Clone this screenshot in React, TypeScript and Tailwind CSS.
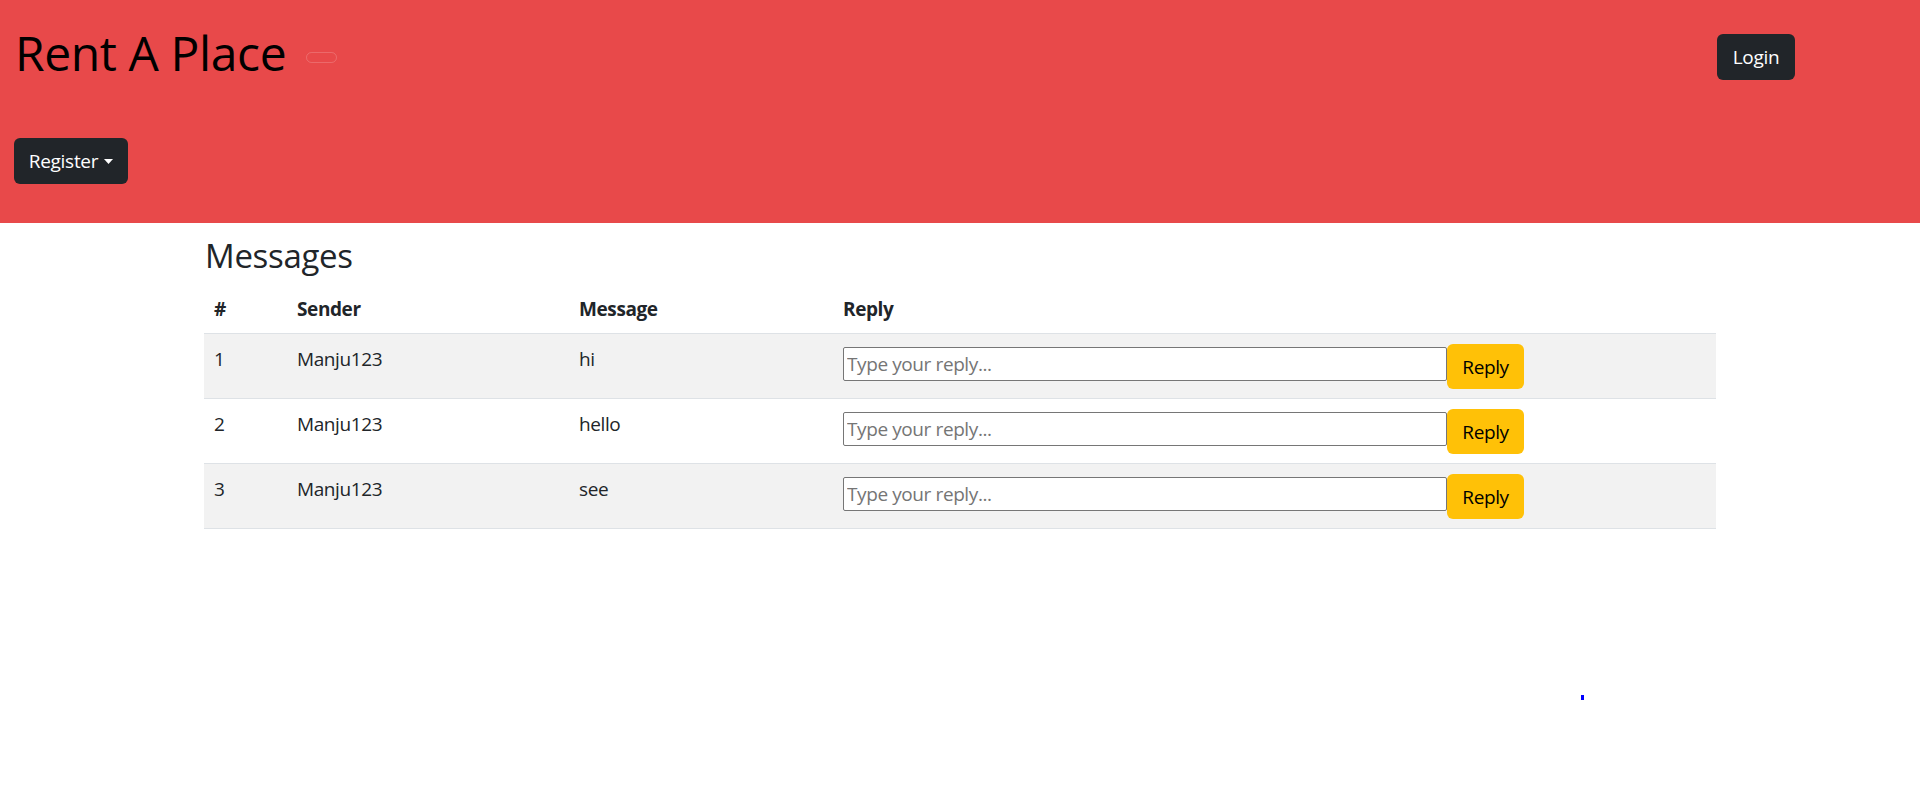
const messages = [
  { id: 1, sender: "Manju123", text: "hi" },
  { id: 2, sender: "Manju123", text: "hello" },
  { id: 3, sender: "Manju123", text: "see" },
];

const App = () => {
  return (
    <div className="min-h-[807px] bg-white font-['Open_Sans',sans-serif] text-[#212529]">
      <header className="bg-[#e8494a] h-[223px] pl-[14px]">
        <div className="flex items-start">
          <h1 className="mt-[23px] ml-[1px] text-[48px] leading-[60px] tracking-[-0.4px] font-medium text-black">
            Rent A Place
          </h1>
          <span className="mt-[52px] ml-[20px] w-[31px] h-[11px] rounded-full border border-[rgba(255,255,255,0.18)]"></span>
          <button className="ml-auto mr-[125px] mt-[34px] w-[78px] h-[46px] rounded-[6px] bg-[#212529] text-white text-[19px] leading-[30px] tracking-[-0.3px]">
            Login
          </button>
        </div>
        <button className="mt-[55px] w-[114px] h-[46px] rounded-[6px] bg-[#212529] text-white text-[19px] leading-[30px] tracking-[-0.3px] flex items-center justify-center gap-[6px]">
          <span>Register</span>
          <svg width="9" height="5" viewBox="0 0 9 5">
            <polygon points="0,0 9,0 4.5,5" fill="white" />
          </svg>
        </button>
      </header>

      <main className="w-[1512px] mx-auto pt-[13px]">
        <h3 className="text-[33px] leading-[40px] tracking-[-0.3px] font-medium mb-[7px] ml-[1px]">Messages</h3>
        <table className="w-full border-collapse text-[19px] leading-[30px] tracking-[-0.4px]">
          <thead>
            <tr className="border-b border-[#dee2e6]">
              <th className="w-[83px] text-left font-bold pt-[11px] pb-[9px] px-[10px]">#</th>
              <th className="w-[282px] text-left font-bold pt-[11px] pb-[9px] px-[10px]">Sender</th>
              <th className="w-[264px] text-left font-bold pt-[11px] pb-[9px] px-[10px]">Message</th>
              <th className="text-left font-bold pt-[11px] pb-[9px] px-[10px]">Reply</th>
            </tr>
          </thead>
          <tbody>
            {messages.map((m, i) => (
              <tr
                key={m.id}
                className={`border-b border-[#dee2e6] ${i % 2 === 0 ? "bg-[#f2f2f2]" : "bg-white"}`}
              >
                <td className="align-top pt-[10px] pb-[9px] px-[10px]">{m.id}</td>
                <td className="align-top pt-[10px] pb-[9px] px-[10px]">{m.sender}</td>
                <td className="align-top pt-[10px] pb-[9px] px-[10px]">{m.text}</td>
                <td className="align-top pt-[10px] pb-[9px] px-[10px]">
                  <div className="flex items-start">
                    <input
                      type="text"
                      placeholder="Type your reply..."
                      className="mt-[3px] w-[604px] h-[34px] bg-white border border-[#767676] rounded-[2px] px-[3px] text-[19px] tracking-[-0.4px] placeholder:text-[#757575] outline-none"
                    />
                    <button className="w-[77px] h-[45px] rounded-[6px] bg-[#ffc107] text-black text-[19px] leading-[30px]">
                      Reply
                    </button>
                  </div>
                </td>
              </tr>
            ))}
          </tbody>
        </table>
        <div className="mt-[166px] ml-[1377px] w-[3px] h-[5px] bg-[#0000ff]"></div>
      </main>
    </div>
  );
};

export default App;
